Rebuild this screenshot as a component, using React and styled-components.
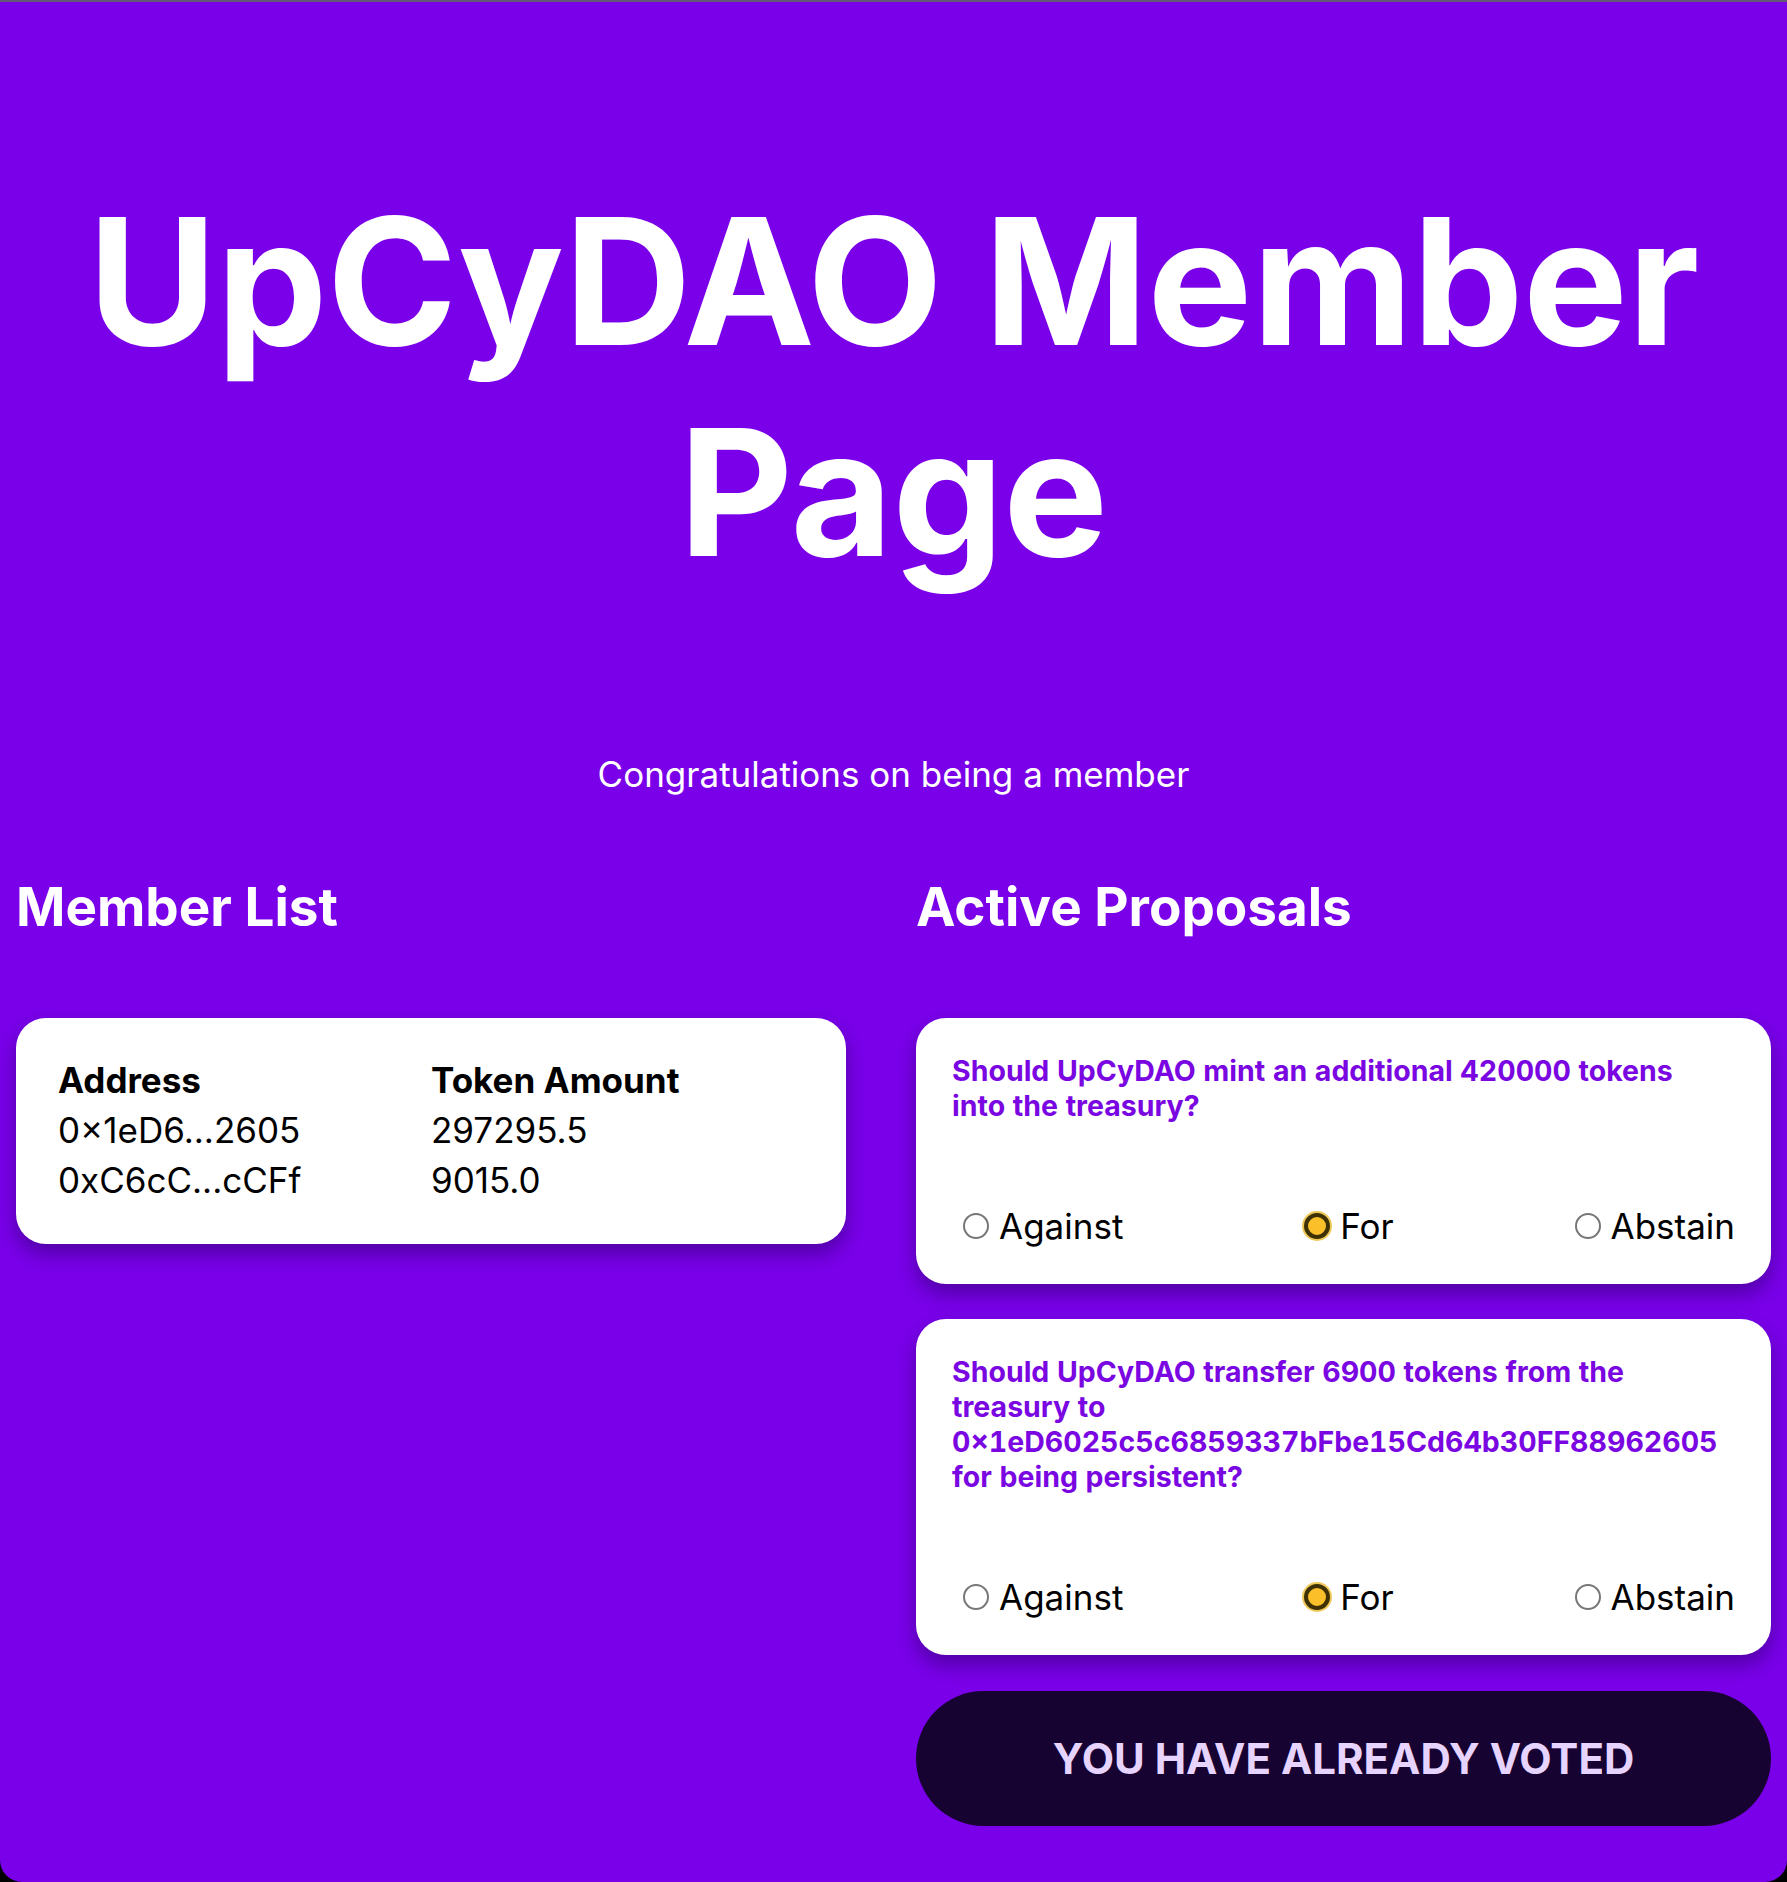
import React from 'react'
import styled, { createGlobalStyle } from 'styled-components'

const GlobalStyle = createGlobalStyle`
  html, body {
    margin: 0;
    padding: 0;
    background: #000;
  }
  body {
    font-family: Inter, "Noto Sans", "Liberation Sans", sans-serif;
    -webkit-font-smoothing: antialiased;
  }
`

const Page = styled.div`
  min-height: 100vh;
  box-sizing: border-box;
  padding: 0 16px 40px;
  background: #7a00ea;
  border-top: 2px solid #625a72;
  border-radius: 0 0 22px 22px;
  color: #fff;
  overflow: hidden;
`

const Title = styled.h1`
  margin: 173px 0 0;
  text-align: center;
  font-size: 176px;
  font-weight: 700;
  line-height: 1.2;
  letter-spacing: -0.3px;
`

const Subtitle = styled.p`
  margin: 156px 0 0;
  text-align: center;
  font-size: 35px;
  font-weight: 400;
  line-height: 1.2;
`

const Columns = styled.div`
  display: grid;
  grid-template-columns: repeat(2, minmax(0, 1fr));
  column-gap: 45px;
  margin-top: 81px;
  align-items: start;
`

const Column = styled.section`
  display: flex;
  flex-direction: column;
  min-width: 0;
`

const SectionTitle = styled.h2`
  margin: 0 0 78px;
  font-size: 53px;
  font-weight: 700;
  line-height: 1.2;
`

const Card = styled.div`
  background: #fff;
  border-radius: 30px;
  box-shadow: 0 10px 20px rgba(32, 0, 80, 0.45);
  color: #000;
`

const MemberCard = styled(Card)`
  margin-right: 25px;
  padding: 37px 42px 39px;
`

const MemberTable = styled.table`
  width: 100%;
  border-collapse: collapse;
  table-layout: fixed;

  th, td {
    padding: 0;
    text-align: left;
    font-size: 35px;
    line-height: 50px;
  }
  th {
    font-weight: 700;
  }
  td {
    font-weight: 400;
  }
`

const ProposalList = styled.div`
  display: flex;
  flex-direction: column;
  gap: 35px;
`

const ProposalCard = styled(Card)`
  padding: 35px 36px 37px;
`

const Question = styled.h5`
  margin: 0 24px 0 0;
  font-size: 28.5px;
  font-weight: 700;
  line-height: 35px;
  font-variant-numeric: tabular-nums;
  color: #7a06e2;
`

const Options = styled.div`
  display: flex;
  justify-content: space-between;
  margin-top: 83px;
`

const Option = styled.label`
  display: flex;
  align-items: center;
  font-size: 35px;
  line-height: 41px;
  color: #000;
`

const Radio = styled.input.attrs({ type: 'radio' })`
  appearance: none;
  box-sizing: border-box;
  width: 26px;
  height: 26px;
  margin: 0 10px 0 11px;
  border-radius: 50%;
  border: 2.5px solid #777;
  background: #fff;

  &:checked {
    border: 4px solid #3e3204;
    background: #fbbf2a;
    box-shadow: 0 0 0 2px #eec95a;
  }
`

const VoteButton = styled.button`
  margin-top: 36px;
  width: 100%;
  height: 135px;
  border: none;
  border-radius: 68px;
  background: #170331;
  color: #e6d4ff;
  font-family: inherit;
  font-size: 42px;
  font-weight: 700;
  text-transform: uppercase;
`

const members = [
  { address: '0×1eD6...2605', amount: '297295.5' },
  { address: '0xC6cC...cCFf', amount: '9015.0' },
]

const proposals = [
  {
    id: 1,
    text: 'Should UpCyDAO mint an additional 420000 tokens into the treasury?',
  },
  {
    id: 2,
    text: 'Should UpCyDAO transfer 6900 tokens from the treasury to 0×1eD6025c5c6859337bFbe15Cd64b30FF88962605 for being persistent?',
  },
]

const choices = ['Against', 'For', 'Abstain']

export default function App() {
  return (
    <>
      <GlobalStyle />
      <Page>
        <Title>UpCyDAO Member Page</Title>
        <Subtitle>Congratulations on being a member</Subtitle>
        <Columns>
          <Column>
            <SectionTitle>Member List</SectionTitle>
            <MemberCard>
              <MemberTable>
                <thead>
                  <tr>
                    <th>Address</th>
                    <th>Token Amount</th>
                  </tr>
                </thead>
                <tbody>
                  {members.map(m => (
                    <tr key={m.address}>
                      <td>{m.address}</td>
                      <td>{m.amount}</td>
                    </tr>
                  ))}
                </tbody>
              </MemberTable>
            </MemberCard>
          </Column>
          <Column>
            <SectionTitle>Active Proposals</SectionTitle>
            <ProposalList>
              {proposals.map(p => (
                <ProposalCard key={p.id}>
                  <Question>{p.text}</Question>
                  <Options>
                    {choices.map(c => (
                      <Option key={c}>
                        <Radio
                          name={`proposal-${p.id}`}
                          value={c}
                          defaultChecked={c === 'For'}
                          disabled
                        />
                        {c}
                      </Option>
                    ))}
                  </Options>
                </ProposalCard>
              ))}
            </ProposalList>
            <VoteButton disabled>You have already voted</VoteButton>
          </Column>
        </Columns>
      </Page>
    </>
  )
}
